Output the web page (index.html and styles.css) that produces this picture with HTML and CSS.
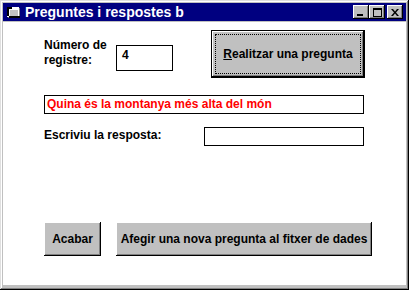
FILE: index.html
```html
<!DOCTYPE html>
<html lang="ca">
<head>
  <meta charset="UTF-8" />
  <title>Preguntes i respostes b</title>
  <link rel="stylesheet" href="styles.css">
</head>
<body>

  <div class="window">
    <div class="titlebar">
      <svg class="app-icon" width="16" height="16" viewBox="0 0 16 16">
        <rect x="2" y="4" width="12" height="10" fill="#808080"/>
        <rect x="1" y="3" width="12" height="10" fill="#ffffff"/>
        <rect x="1" y="3" width="5" height="2" fill="#000000"/>
        <rect x="1" y="3" width="2" height="9" fill="#000000"/>
        <rect x="4" y="6" width="8" height="6" fill="#c0c0c0"/>
        <rect x="3" y="12" width="11" height="2" fill="#000000"/>
      </svg>
      <span class="title">Preguntes i respostes b</span>
      <div class="caption-buttons">
        <span class="cap-btn">
          <svg width="8" height="7" viewBox="0 0 8 7"><rect x="0" y="5" width="6" height="2" fill="#000"/></svg>
        </span>
        <span class="cap-btn">
          <svg width="9" height="9" viewBox="0 0 9 9"><path d="M0 0h9v9h-9z M1 2v6h7v-6z" fill="#000" fill-rule="evenodd"/></svg>
        </span>
        <span class="cap-btn close">
          <svg width="8" height="7" viewBox="0 0 8 7"><path d="M0 0h2l2 2.5 2-2.5h2l-3 3.5 3 3.5h-2l-2-2.5-2 2.5h-2l3-3.5z" fill="#000"/></svg>
        </span>
      </div>
    </div>

    <div class="client">
      <div class="row top-row">
        <div class="label record-label">Número de<br>registre:</div>
        <div class="textbox record-box">4</div>
        <button class="btn default ask-btn"><span class="focus"><u>R</u>ealitzar una pregunta</span></button>
      </div>

      <div class="row">
        <div class="question">Quina és la montanya més alta del món</div>
      </div>

      <div class="row answer-row">
        <div class="label answer-label">Escriviu la resposta:</div>
        <div class="textbox answer-box"></div>
      </div>

      <div class="row bottom-row">
        <button class="btn quit-btn"><span class="plain">Acabar</span></button>
        <button class="btn add-btn"><span class="plain">Afegir una nova pregunta al fitxer de dades</span></button>
      </div>
    </div>
  </div>

</body>
</html>
```

FILE: styles.css
```css
body {
  margin: 0;
  background: #c0c0c0;
  font-family: "Liberation Sans", Arial, sans-serif;
  font-size: 12px;
  font-weight: bold;
}

.window {
  width: 409px;
  height: 290px;
  box-sizing: border-box;
  padding: 3px 3px 5px 3px;
  background: #c0c0c0;
  display: flex;
  flex-direction: column;
  box-shadow: inset -1px -1px #000, inset 1px 1px #dfdfdf, inset -2px -2px #808080, inset 2px 2px #fff;
}

.titlebar {
  height: 18px;
  background: #000080;
  color: #fff;
  display: flex;
  align-items: center;
  padding: 0 3px 0 3px;
}

.app-icon {
  margin-right: 3px;
}

.title {
  flex: 1;
  font-size: 14px;
  line-height: 18px;
}

.caption-buttons {
  display: flex;
}

.cap-btn {
  width: 16px;
  height: 14px;
  box-sizing: border-box;
  background: #c0c0c0;
  display: flex;
  align-items: center;
  justify-content: center;
  box-shadow: inset -1px -1px #000, inset 1px 1px #fff, inset -2px -2px #808080;
}

.cap-btn.close {
  margin-left: 2px;
}

.client {
  flex: 1;
  margin-top: 1px;
  background: #fff;
  padding-left: 41px;
  color: #000;
}

.row {
  display: flex;
  align-items: flex-start;
}

.label {
  line-height: 15px;
}

.top-row {
  padding-top: 8px;
}

.record-label {
  width: 72px;
  margin-top: 8px;
}

.textbox {
  box-sizing: border-box;
  border: 1px solid #000;
  background: #fff;
  line-height: 14px;
}

.record-box {
  width: 57px;
  height: 26px;
  margin-top: 15px;
  padding: 2px 5px;
}

.btn {
  font: inherit;
  color: #000;
  background: #c0c0c0;
  box-sizing: border-box;
  padding: 0;
  border: none;
  display: flex;
  box-shadow: inset -1px -1px #000, inset 1px 1px #fff, inset -2px -2px #808080;
}

.btn.default {
  border: 1px solid #000;
  padding: 3px;
}

.focus {
  flex: 1;
  border: 1px dotted #000;
  display: flex;
  align-items: center;
  justify-content: center;
}

.plain {
  flex: 1;
  display: flex;
  align-items: center;
  justify-content: center;
}

.ask-btn {
  width: 154px;
  height: 48px;
  margin-left: 38px;
}

.question {
  width: 320px;
  height: 19px;
  box-sizing: border-box;
  margin-top: 17px;
  border: 1px solid #000;
  padding-left: 2px;
  line-height: 17px;
  color: #ff0000;
}

.answer-row {
  margin-top: 13px;
}

.answer-label {
  width: 160px;
  line-height: 17px;
}

.answer-box {
  width: 160px;
  height: 19px;
}

.bottom-row {
  margin-top: 76px;
}

.quit-btn {
  width: 57px;
  height: 34px;
}

.add-btn {
  width: 256px;
  height: 34px;
  margin-left: 15px;
}
```
